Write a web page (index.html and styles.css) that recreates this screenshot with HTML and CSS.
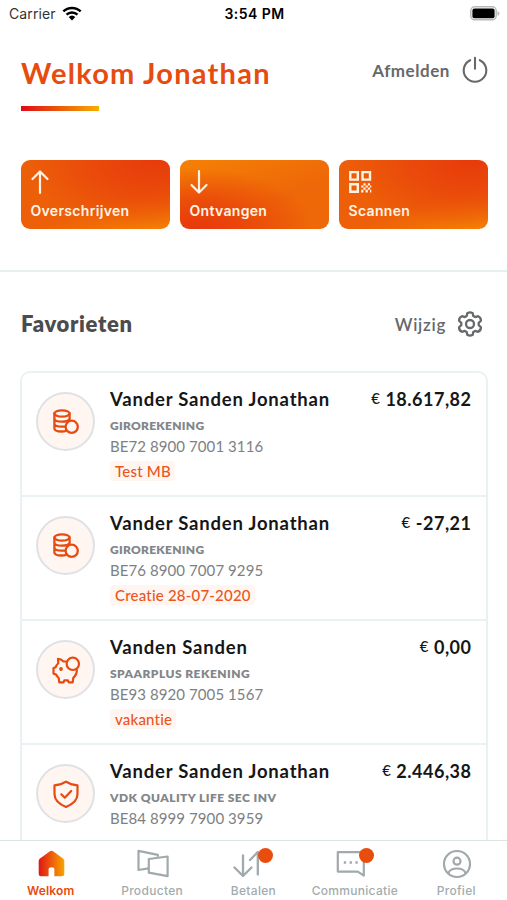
FILE: index.html
```html
<!DOCTYPE html>
<html lang="nl">
<head>
<meta charset="utf-8">
<meta name="viewport" content="width=device-width, initial-scale=1">
<title>Welkom</title>
<link rel="stylesheet" href="styles.css">
</head>
<body>
<svg class="defs" width="0" height="0" aria-hidden="true">
  <symbol id="coins" viewBox="0 0 26 26"><g fill="none" stroke="#e64b10" stroke-width="2.300" stroke-linecap="round"><ellipse cx="9" cy="4.500" rx="7.600" ry="3.200"/><path d="M1.400 4.500v15c0 1.900 3 3 7.600 3 1.200 0 2.300-.1 3.300-.4M16.600 4.500v5.500M1.400 9.500c0 1.900 3 3.200 7.600 3.200s7-1 7.600-2.700M1.400 14.500c0 1.900 3 3.200 7.600 3.200h2.500"/><circle cx="18.700" cy="17.800" r="6.100" fill="#fff5f1"/></g></symbol>
</svg>
<div class="screen">
  <div class="statusbar">
    <div class="carrier"><span>Carrier</span>
      <svg width="20" height="15" viewBox="0 0 20 15"><g fill="none" stroke="#000" stroke-width="2.500"><path d="M1.300 5.400a12.500 12.500 0 0 1 17.400 0"/><path d="M4.500 8.700a8 8 0 0 1 11 0"/></g><path d="M6.700 11a4.800 4.800 0 0 1 6.600 0L10 14.400z"/></svg>
    </div>
    <div class="clock">3:54 PM</div>
    <svg class="battery" width="31" height="15" viewBox="0 0 31 15"><rect x="1.800" y=".8" width="25.400" height="13" rx="4" fill="#fff" stroke="#b9b9b9" stroke-width="1.500"/><rect x="3.400" y="2.500" width="22.200" height="9.800" rx="2"/><path d="M28.500 5v4.800q2-.7 2-2.400t-2-2.400z" fill="#b9b9b9"/></svg>
  </div>

  <main class="content">
    <header class="header">
      <div>
        <h1 class="title">Welkom Jonathan</h1>
        <div class="accent"></div>
      </div>
      <div class="logout"><span>Afmelden</span>
        <svg width="28" height="28" viewBox="0 0 28 28"><g fill="none" stroke="#66696b" stroke-width="2.100" stroke-linecap="round"><path d="M9.200 4.200a11.300 11.300 0 1 0 9.600 0M14 1.800v11"/></g></svg>
      </div>
    </header>

    <div class="actions">
      <div class="action action-a">
        <svg width="24" height="26" viewBox="0 0 24 26"><path d="M9 24V3M1.500 10 9 2.500l7.500 7.500" fill="none" stroke="#fff4e4" stroke-width="2.200" stroke-linecap="round" stroke-linejoin="round"/></svg>
        <span>Overschrijven</span>
      </div>
      <div class="action action-b">
        <svg width="24" height="26" viewBox="0 0 24 26"><path d="M9 2v21M1.500 16 9 23.500l7.500-7.500" fill="none" stroke="#fff4e4" stroke-width="2.200" stroke-linecap="round" stroke-linejoin="round"/></svg>
        <span>Ontvangen</span>
      </div>
      <div class="action action-a">
        <svg width="24" height="26" viewBox="0 0 24 26"><g fill="none" stroke="#fff4e4" stroke-width="2.400"><path d="M1.300 3.100h7.500v7.500H1.300zM13.500 3.100H21v7.500h-7.500zM1.300 15.300h7.500v7.500H1.300z"/></g><path fill="#fff4e4" d="M14.400 14.200h2.200v2.200h-2.200zM18.800 14.200H21v2.200h-2.200zM12.200 16.400h2.200v2.200h-2.200zM16.600 16.400h2.200v2.200h-2.200zM14.400 18.600h2.200v2.200h-2.200zM18.800 18.600H21v2.200h-2.200zM12.200 20.800h2.200V23.400h-2.200zM16.600 20.800h2.200V23.400h-2.200zM21 16.400h1.300v2.200H21zM21 20.800h1.300v2.600H21z"/></svg>
        <span>Scannen</span>
      </div>
    </div>

    <section class="favorites">
      <div class="section-head">
        <h2 class="section-title">Favorieten</h2>
        <div class="edit"><span>Wijzig</span>
          <svg width="26" height="26" viewBox="0 0 26 26"><g fill="none" stroke="#66696b" stroke-width="2.300" stroke-linejoin="round"><path d="M10.300 2.200Q13 .4 15.700 2.200L16.300 5 18.200 6.100 21.100 5.200Q24.100 6.500 23.900 9.700L21.700 11.900V14.100L23.900 16.300Q24.100 19.500 21.100 20.800L18.200 19.900 16.300 21 15.700 23.800Q13 25.600 10.300 23.800L9.700 21 7.800 19.900 4.900 20.800Q1.900 19.500 2.100 16.300L4.300 14.100V11.900L2.100 9.700Q1.900 6.500 4.900 5.200L7.800 6.100 9.700 5Z"/><circle cx="13" cy="13" r="4"/></g></svg>
        </div>
      </div>
      <div class="card">
        <article class="account">
          <div class="avatar"><svg width="26" height="26"><use href="#coins"/></svg></div>
          <div class="info"><div class="name">Vander Sanden Jonathan</div><div class="type">GIROREKENING</div><div class="iban">BE72 8900 7001 3116</div><div class="tag">Test MB</div></div>
          <div class="amount"><span class="euro">€</span><span>18.617,82</span></div>
        </article>
        <article class="account">
          <div class="avatar"><svg width="26" height="26"><use href="#coins"/></svg></div>
          <div class="info"><div class="name">Vander Sanden Jonathan</div><div class="type">GIROREKENING</div><div class="iban">BE76 8900 7007 9295</div><div class="tag">Creatie 28-07-2020</div></div>
          <div class="amount"><span class="euro">€</span><span>-27,21</span></div>
        </article>
        <article class="account">
          <div class="avatar"><svg width="28" height="28" viewBox="0 0 28 28"><g fill="none" stroke="#e64b10" stroke-width="2.200" stroke-linejoin="round" stroke-linecap="round"><path d="M14.500 5.500h-3Q9 2.800 6 2.800l.3 4.500Q4.400 9 3.700 11.300l-2.200.8v5.500l2.600.9q1 2.200 2.600 3.500l.6 4.300h4.200l.8-2h3.600l.8 2h4l.6-4.500q3.800-3.300 3.500-8"/><circle cx="20.800" cy="7.800" r="6.200"/></g><circle cx="9" cy="13" r="1.900" fill="#e64b10"/></svg></div>
          <div class="info"><div class="name">Vanden Sanden</div><div class="type type-wide">SPAARPLUS REKENING</div><div class="iban">BE93 8920 7005 1567</div><div class="tag">vakantie</div></div>
          <div class="amount"><span class="euro">€</span><span>0,00</span></div>
        </article>
        <article class="account">
          <div class="avatar"><svg width="28" height="28" viewBox="0 0 28 28"><g fill="none" stroke="#e64b10" stroke-width="2.200" stroke-linejoin="round" stroke-linecap="round"><path d="M14 1.600Q19 5 25.500 5.300V14c0 6.200-5 10.300-11.500 12.900C7.500 24.300 2.500 20.200 2.500 14V5.300Q9 5 14 1.600z"/><path d="m9.300 14.300 3.500 3.400 6.400-6.700"/></g></svg></div>
          <div class="info"><div class="name">Vander Sanden Jonathan</div><div class="type type-wide">VDK QUALITY LIFE SEC INV</div><div class="iban">BE84 8999 7900 3959</div></div>
          <div class="amount"><span class="euro">€</span><span>2.446,38</span></div>
        </article>
      </div>
    </section>
  </main>

  <nav class="tabbar">
    <div class="tab active">
      <svg width="36" height="32" viewBox="0 0 36 32"><defs><linearGradient id="home" x1="0" x2="1"><stop offset="0" stop-color="#df1715"/><stop offset=".5" stop-color="#ee5b0c"/><stop offset="1" stop-color="#f6a600"/></linearGradient></defs><path fill="url(#home)" d="M16.900 4.200q1.600-1 3.200 0l10.200 7.500q1 .9 1 2.300v13q0 2.300-2.300 2.300h-7.600v-7q0-2-2.900-2t-2.900 2v7H8q-2.300 0-2.300-2.300v-13q0-1.400 1-2.300z"/></svg>
      <span>Welkom</span></div>
    <div class="tab">
      <svg width="36" height="32" viewBox="0 0 36 32"><g fill="none" stroke="#a0a9ac" stroke-width="2.200" stroke-linejoin="round"><path d="M14.500 21.300 4.500 23V3.800l19.300 4v2"/><path d="m14.800 12 18.800-2.500v19.700l-18.800-3.500z"/></g></svg>
      <span>Producten</span></div>
    <div class="tab">
      <svg width="36" height="32" viewBox="0 0 36 32"><path d="M8 8.500v20M-.5 20.500 8 29l8.500-8.500M22.800 27.500V6M15 13l7.800-8 7 7" fill="none" stroke="#a0a9ac" stroke-width="2.300" stroke-linecap="round" stroke-linejoin="round"/></svg>
      <i class="badge"></i><span>Betalen</span></div>
    <div class="tab">
      <svg width="36" height="32" viewBox="0 0 36 32"><path d="M.8 5.200h26v23.400l-6-4H.8z" fill="none" stroke="#a0a9ac" stroke-width="2.200" stroke-linejoin="round"/><path d="M6.800 15.500h2.300M12.600 15.500h2.300M18.400 15.500h2.300" stroke="#a0a9ac" stroke-width="2.300"/></svg>
      <i class="badge"></i><span>Communicatie</span></div>
    <div class="tab">
      <svg width="36" height="32" viewBox="0 0 36 32"><g fill="none" stroke="#a0a9ac" stroke-width="2.200"><circle cx="19" cy="17" r="13"/><circle cx="19" cy="14.200" r="3.500"/><path d="M10.300 26.500q1.500-5 8.700-5t8.700 5"/></g></svg>
      <span>Profiel</span></div>
  </nav>
</div>
</body>
</html>
```
FILE: styles.css
```css
* { box-sizing: border-box; }
body { margin: 0; background: #fff; font-family: Lato, "Open Sans", sans-serif; font-variant-ligatures: none; color: #161616; }
h1, h2 { margin: 0; }
svg { display: block; flex: none; overflow: visible; }
span, h1, h2 { white-space: nowrap; }
.defs { position: absolute; }
.screen { width: 507px; height: 900px; display: flex; flex-direction: column; overflow: hidden; }

.statusbar { height: 28px; flex: none; display: grid; grid-template-columns: 1fr auto 1fr; align-items: center; padding: 0 7px 1px 9px; font-family: Inter, sans-serif; font-size: 14px; }
.carrier { display: flex; align-items: center; gap: 6px; color: #333; letter-spacing: .1px; }
.clock { font-weight: 600; font-size: 14px; letter-spacing: .45px; color: #000; }
.battery { justify-self: end; }

.content { flex: 1; min-height: 0; overflow: hidden; }
.header { display: flex; justify-content: space-between; padding: 27px 18px 0 21px; height: 132px; }
.title { font-size: 29px; line-height: 36px; font-weight: 700; color: #e64b10; letter-spacing: 1.250px; }
.accent { width: 78px; height: 5px; margin: 15px 0 0 -.5px; background: linear-gradient(90deg, #e10a17, #ea5b0c 50%, #f6ae00); }
.logout { display: flex; align-items: center; gap: 11px; height: 30px; font-size: 17px; font-weight: 700; letter-spacing: .55px; color: #66696b; }

.actions { display: flex; gap: 10px; padding: 0 19.500px 41px 20.500px; border-bottom: 2px solid #e5f1f1; }
.action { flex: 1; height: 69px; border-radius: 9px; padding: 9px 10px; display: flex; flex-direction: column; gap: 6px; font-family: Inter, sans-serif; font-size: 14px; line-height: 20px; font-weight: 600; letter-spacing: .32px; color: #fff4e4; }
.action-a { background: radial-gradient(ellipse at 90% 0, #e73b0b 0, #e9450bcc 35%, transparent 70%), linear-gradient(160deg, #ec600a, #ed5f08 60%, #f48204); }
.action-b { background: radial-gradient(ellipse at 12% 100%, #e8380c 0, #e9450bcc 30%, transparent 62%), linear-gradient(160deg, #f58105, #ee6708 60%, #ee6907); }

.favorites { padding: 38px 19px 0 20px; }
.section-head { display: flex; justify-content: space-between; align-items: center; height: 28px; padding: 0 5px 0 1px; }
.section-title { font-size: 22px; line-height: 28px; font-weight: 800; letter-spacing: .65px; color: #4c4c4d; }
.edit { display: flex; align-items: center; gap: 11px; font-size: 17px; font-weight: 600; letter-spacing: .7px; color: #66696b; }
.card { margin-top: 33px; border: 2px solid #e8f2f2; border-bottom: 0; border-radius: 10px 10px 0 0; }
.account { display: flex; height: 124px; padding: 13px 14.500px 0 14px; border-bottom: 2px solid #e8f2f2; }
.avatar { width: 59px; height: 59px; margin: 6px 15px 0 0; border: 2px solid #dfe2e5; border-radius: 50%; background: #fff5f1; display: flex; align-items: center; justify-content: center; flex: none; }
.info { flex: 1; }
.name { font-size: 18.500px; line-height: 26px; font-weight: 700; letter-spacing: .8px; }
.type { margin-top: 3px; font-size: 12px; line-height: 22px; font-weight: 800; letter-spacing: .27px; color: #838688; }
.type-wide { letter-spacing: .45px; }
.iban { margin-top: -1px; font-size: 15px; line-height: 20px; letter-spacing: .08px; color: #7d8183; }
.tag { width: max-content; margin-top: 5px; padding: 0 4px 0 5px; font-size: 15px; line-height: 20px; font-weight: 500; letter-spacing: .2px; color: #ea5520; background: #fff5f1; border-radius: 4px; }
.amount { font-size: 18px; line-height: 26px; font-weight: 700; letter-spacing: .5px; display: flex; gap: 5px; }
.euro { font-size: 15px; font-weight: 500; line-height: 24px; }

.tabbar { height: 60px; flex: none; display: grid; grid-template-columns: repeat(5, 1fr); border-top: 1px solid #dce4e4; background: #fff; }
.tab { position: relative; display: flex; flex-direction: column; align-items: center; padding-top: 6px; font-family: Inter, sans-serif; font-size: 12px; letter-spacing: .3px; color: #a3abae; }
.tab span { margin-top: 5px; line-height: 14px; font-weight: 500; }
.active { color: #e64b10; }
.tab.active span { font-weight: 600; letter-spacing: .15px; }
.badge { position: absolute; top: 7px; left: 55px; width: 15px; height: 15px; border-radius: 50%; background: #e84d0e; }
```
